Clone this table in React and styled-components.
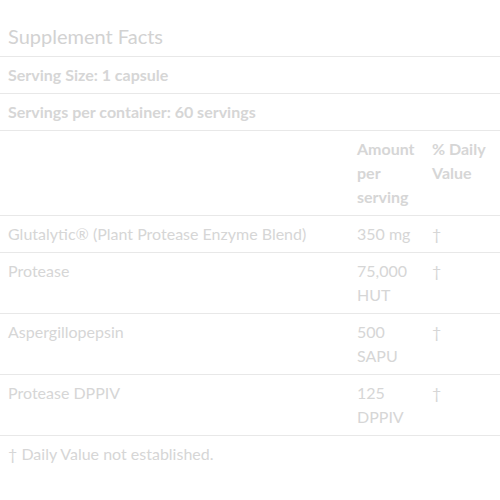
import React from "react";
import styled, { createGlobalStyle } from "styled-components";

const Global = createGlobalStyle`
  html, body { margin: 0; padding: 0; background: #fff; }
  body { font-family: Lato, "Open Sans", sans-serif; color: #d6d6d6; }
`;

const Wrap = styled.section`
  width: 500px;
`;

const Title = styled.h2`
  margin: 0;
  padding: 21px 8px 5px;
  font-size: 20px;
  line-height: 30px;
  font-weight: 400;
  color: #d2d2d2;
  border-bottom: 1px solid #e8e8e8;
`;

const Table = styled.table`
  width: 500px;
  border-collapse: collapse;
  table-layout: fixed;
  font-size: 16px;
  line-height: 24px;
`;

const Cell = styled.td`
  padding: 6px 8px 6px;
  vertical-align: top;
  text-align: left;
  font-weight: ${(p) => (p.$bold ? 700 : 400)};
  border-bottom: 1px solid #e8e8e8;
`;

const Head = styled(Cell).attrs({ as: "th" })``;

const Note = styled.p`
  margin: 0;
  padding: 6px 8px;
  font-size: 16px;
  line-height: 24px;
  font-weight: 400;
`;

const rows = [
  ["Glutalytic® (Plant Protease Enzyme Blend)", "350 mg", "†"],
  ["Protease", "75,000 HUT", "†"],
  ["Aspergillopepsin", "500 SAPU", "†"],
  ["Protease DPPIV", "125 DPPIV", "†"],
];

export default function App() {
  return (
    <Wrap>
      <Global />
      <Title>Supplement Facts</Title>
      <Table>
        <colgroup>
          <col style={{ width: 349 }} />
          <col style={{ width: 75 }} />
          <col style={{ width: 76 }} />
        </colgroup>
        <tbody>
          <tr>
            <Cell colSpan={3} $bold>Serving Size: 1 capsule</Cell>
          </tr>
          <tr>
            <Cell colSpan={3} $bold>Servings per container: 60 servings</Cell>
          </tr>
          <tr>
            <Head $bold></Head>
            <Head $bold>Amount per serving</Head>
            <Head $bold>% Daily Value</Head>
          </tr>
          {rows.map(([name, amt, dv]) => (
            <tr key={name}>
              <Cell>{name}</Cell>
              <Cell>{amt}</Cell>
              <Cell>{dv}</Cell>
            </tr>
          ))}
        </tbody>
      </Table>
      <Note>† Daily Value not established.</Note>
    </Wrap>
  );
}
